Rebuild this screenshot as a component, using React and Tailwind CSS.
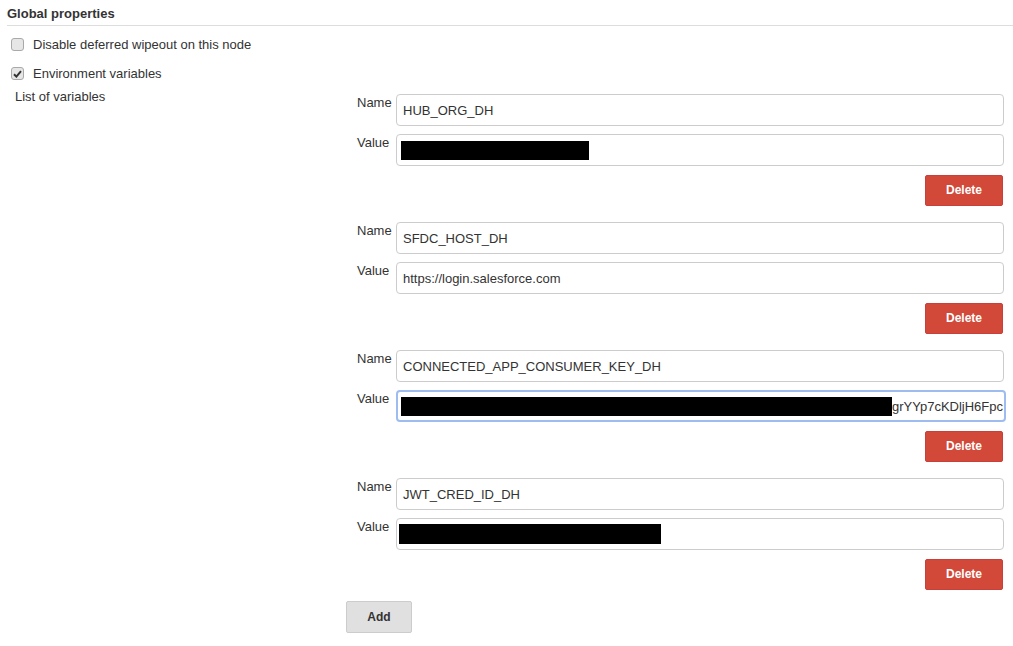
import React from 'react';

const vars = [
  { name: 'HUB_ORG_DH', value: { redact: 188, offset: 2 } },
  { name: 'SFDC_HOST_DH', value: { text: 'https://login.salesforce.com' } },
  { name: 'CONNECTED_APP_CONSUMER_KEY_DH', value: { redact: 491, offset: 2, tail: 'grYYp7cKDljH6Fpc' }, focused: true },
  { name: 'JWT_CRED_ID_DH', value: { redact: 262, offset: 4, h: 20 } },
];

function Checkbox({ checked }) {
  return (
    <span className="inline-flex h-[13px] w-[13px] items-center justify-center rounded-[3px] border border-[#a9a9a9] bg-[#e6e6e6]">
      {checked && (
        <svg width="9" height="8" viewBox="0 0 9 8">
          <path d="M1 4.2 L3.4 6.6 L8 1.2" fill="none" stroke="#333" strokeWidth="2" />
        </svg>
      )}
    </span>
  );
}

function Field({ label, children, focused }) {
  return (
    <div className="flex">
      <div className="w-[50px] shrink-0 pl-[11px] pt-[1px] leading-[16px] text-[13px] text-[#333]">{label}</div>
      <div
        className={
          'flex h-[32px] min-w-0 flex-1 items-center overflow-hidden rounded-[4px] bg-white px-[6px] text-[13px] text-[#333] ' +
          (focused ? 'mr-[-2px] border-2 border-[#9ebcef] pl-[5px]' : 'border border-[#cccccc]')
        }
      >
        {children}
      </div>
    </div>
  );
}

export default function App() {
  return (
    <div className="min-h-[646px] bg-white text-[13px] leading-[19px] text-[#333]" style={{ fontFamily: '"Liberation Sans", Arial, sans-serif' }}>
      <div className="pl-[7px] pt-[4px]">
        <div className="font-bold">Global properties</div>
        <div className="mt-[2px] h-px bg-[#dddddd]" />
      </div>

      <div className="mt-[9px] flex items-center gap-[9px] pl-[11px]">
        <Checkbox />
        <span>Disable deferred wipeout on this node</span>
      </div>
      <div className="mt-[10px] flex items-center gap-[9px] pl-[11px]">
        <Checkbox checked />
        <span>Environment variables</span>
      </div>

      <div className="mt-[4px] flex">
        <div className="w-[346px] shrink-0 pl-[15px]">List of variables</div>
        <div className="mr-[9px] min-w-0 flex-1 pt-[7px]">
          {vars.map((v) => (
            <div key={v.name} className="mb-[16px] flex flex-col gap-[8px]">
              <Field label="Name">{v.name}</Field>
              <Field label="Value" focused={v.focused}>
                {v.value.text}
                {v.value.redact && (
                  <span
                    className="shrink-0 bg-black"
                    style={{ width: v.value.redact, height: v.value.h || 19, marginLeft: -(v.value.offset || 0) }}
                  />
                )}
                {v.value.tail && <span className="ml-auto whitespace-nowrap">{v.value.tail}</span>}
              </Field>
              <div className="mt-[1px] flex justify-end">
                <button className="mr-[1px] h-[31px] w-[78px] rounded-[2px] border border-[#c9403a] bg-[#d24939] text-[12px] font-bold text-white">
                  Delete
                </button>
              </div>
            </div>
          ))}
          <div className="mt-[-5px]">
            <button className="h-[32px] w-[66px] rounded-[2px] border border-[#cccccc] bg-[#e0e0e0] text-[12px] font-bold text-[#333]">
              Add
            </button>
          </div>
        </div>
      </div>
    </div>
  );
}
